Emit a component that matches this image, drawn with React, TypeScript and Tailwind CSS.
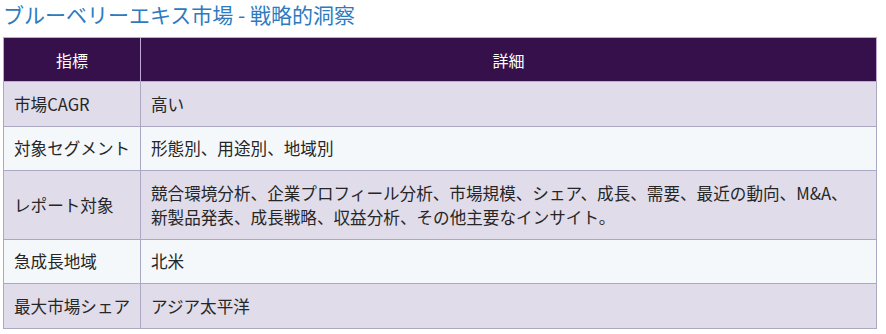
import React from "react";

const rows: [string, React.ReactNode, string][] = [
  ["市場CAGR", "高い", "bg-[#e0dcea]"],
  ["対象セグメント", "形態別、用途別、地域別", "bg-[#f4f8fb]"],
  [
    "レポート対象",
    <>
      競合環境分析、企業プロフィール分析、市場規模、シェア、成長、需要、最近の動向、M&amp;A、
      <br />
      新製品発表、成長戦略、収益分析、その他主要なインサイト。
    </>,
    "bg-[#e0dcea]",
  ],
  ["急成長地域", "北米", "bg-[#f4f8fb]"],
  ["最大市場シェア", "アジア太平洋", "bg-[#e0dcea]"],
];

export default function App() {
  return (
    <div
      className="w-[886px] h-[334px] bg-white px-[3px] text-[#262626]"
      style={{ fontFamily: '"Noto Sans CJK JP", "Noto Sans", sans-serif' }}
    >
      <div className="text-[21px] leading-[28px] text-[#2d7bbf] h-[37px]">
        ブルーベリーエキス市場 - 戦略的洞察
      </div>
      <table className="w-[874px] table-fixed border-collapse text-[16.6px] leading-[24px]">
        <thead>
          <tr className="bg-[#36104a] text-white">
            <th className="w-[137px] h-[44px] border border-[#bfa9d3] font-normal text-[16px] text-center">指標</th>
            <th className="h-[44px] border border-[#bfa9d3] font-normal text-[16px] text-center">詳細</th>
          </tr>
        </thead>
        <tbody>
          {rows.map(([k, v, bg], i) => (
            <tr key={i} className={bg}>
              <td className="border border-[#aaa8c2] pl-[10px] pr-0 py-[9.75px] align-middle whitespace-nowrap">{k}</td>
              <td className="border border-[#aaa8c2] px-[10px] py-[9.75px] align-middle">{v}</td>
            </tr>
          ))}
        </tbody>
      </table>
    </div>
  );
}
